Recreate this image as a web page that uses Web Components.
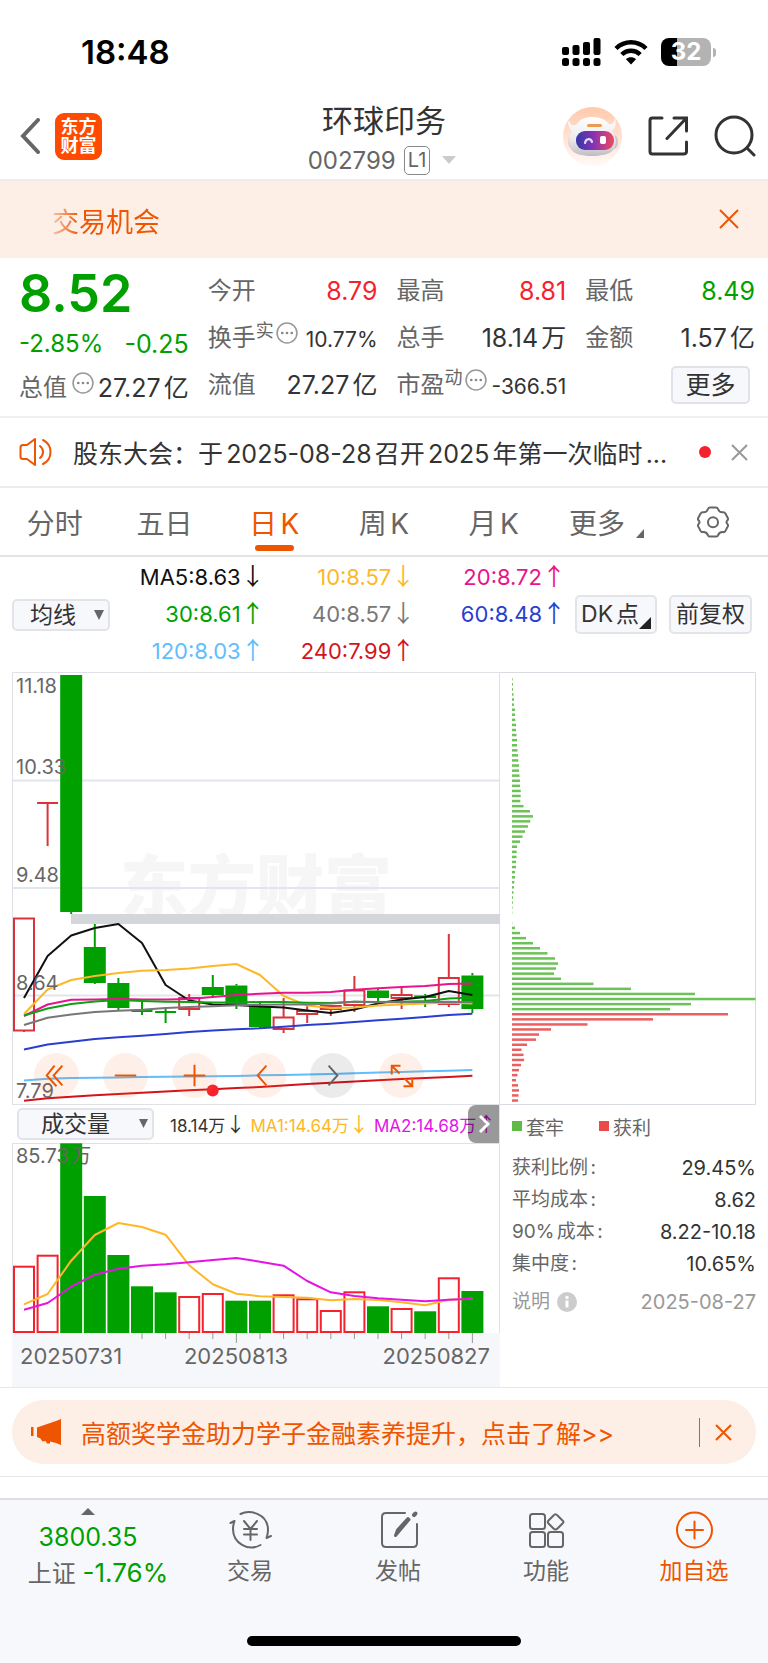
<!DOCTYPE html>
<html lang="zh-CN">
<head>
<meta charset="utf-8">
<meta name="viewport" content="width=device-width, initial-scale=1">
<title>环球印务 002799</title>
<style>
  body {
    margin: 0;
    background: #fff;
    color: #333;
    font-family: Inter, "Noto Sans CJK SC", sans-serif;
    text-autospace: normal;
    --up: #f5222d;
    --down: #00a000;
    --brand: #ee5500;
    --muted: #666;
    --line: #e6e8ec;
    --soft: #f7f8fb;
    --peach: #fdeee6;
  }
</style>
</head>
<body>
<stock-page></stock-page>

<script>
const RESET = `
  :host, * { box-sizing: border-box; }
  button, select { font: inherit; color: inherit; background: none; border: 0; padding: 0; margin: 0; cursor: pointer; text-autospace: inherit; }
  a { color: inherit; text-decoration: none; }
  svg { display: block; }
`;

class StatusBar extends HTMLElement {
  constructor() {
    super();
    this.attachShadow({ mode: 'open' });
  }

  connectedCallback() {
    this.shadowRoot.innerHTML = `
      <style>
        ${RESET}
        :host { display: flex; justify-content: space-between; align-items: center; height: 90px; padding: 14px 52px 0 81px; color: #000; }
        .time { font-size: 33px; font-weight: 600; }
        .right { display: flex; align-items: center; gap: 13px; }
        .battery { display: flex; align-items: center; gap: 2px; }
        .cell { width: 50px; height: 28px; border-radius: 8px; background: linear-gradient(90deg, #000 32%, #b3b3b3 32%); color: #fff; font-size: 24px; line-height: 28px; font-weight: 700; text-align: center; }
        .nub { width: 3px; height: 9px; border-radius: 0 4px 4px 0; background: #b3b3b3; }
      </style>
      <span class="time">18:48</span>
      <div class="right">
        <svg width="39" height="28" viewBox="0 0 39 28" aria-label="信号">
          <rect x="0" y="9" width="7" height="8" rx="2"/><rect x="10.500" y="7" width="7" height="10" rx="2"/>
          <rect x="21" y="4" width="7" height="13" rx="2"/><rect x="31.500" y="0" width="7" height="17" rx="2"/>
          <rect x="0" y="20" width="7" height="8" rx="2.500"/><rect x="10.500" y="20" width="7" height="8" rx="2.500"/>
          <rect x="21" y="20" width="7" height="8" rx="2.500"/><rect x="31.500" y="20" width="7" height="8" rx="2.500"/>
        </svg>
        <svg width="34" height="26" viewBox="0 0 34 26" fill="none" stroke="#000" stroke-width="4.500" aria-label="无线网络">
          <path d="M2 9.500C10.500 1.300 23.500 1.300 32 9.500"/>
          <path d="M7.800 15.500C13 10.500 21 10.500 26.200 15.500"/>
          <path d="M17 25.500l-5-5.300c2.800-2.600 7.200-2.600 10 0z" fill="#000" stroke="none"/>
        </svg>
        <div class="battery"><span class="cell">32</span><span class="nub"></span></div>
      </div>
    `;
  }
}

class StockHeader extends HTMLElement {
  constructor() {
    super();
    this.attachShadow({ mode: 'open' });
  }

  connectedCallback() {
    this.shadowRoot.innerHTML = `
      <style>
        ${RESET}
        :host { display: grid; grid-template-columns: 1fr auto 1fr; align-items: center; height: 91px; padding: 3px 12px 0; border-bottom: 2px solid #ececee; }
        .left { display: flex; align-items: center; gap: 15px; padding-left: 8px; }
        .logo { width: 47px; height: 47px; border-radius: 9px; background: #ff4a00; color: #fff; font-size: 18px; line-height: 19px; font-weight: 700; display: grid; place-content: center; text-align: center; }
        .mid { padding-top: 8px; text-align: center; }
        h1 { margin: 0; font-size: 31px; line-height: 40px; font-weight: 400; }
        .code { display: flex; align-items: center; justify-content: center; gap: 8px; height: 38px; font-size: 24px; color: var(--muted); }
        .level { font-size: 20px; line-height: 27px; padding: 0 3px; border: 1px solid #888; border-radius: 5px; }
        .code svg { margin: 0 4px; }
        .right { display: flex; align-items: center; justify-content: flex-end; gap: 26px; }
      </style>
      <div class="left">
        <button aria-label="返回"><svg width="20" height="36" viewBox="0 0 20 36" fill="none" stroke="#666" stroke-width="4" stroke-linecap="round"><path d="M18 2L3 18l15 16"/></svg></button>
        <a class="logo" href="#"><span>东方</span><span>财富</span></a>
      </div>
      <div class="mid">
        <h1>环球印务</h1>
        <div class="code"><span>002799</span><span class="level">L1</span><svg width="14" height="8" viewBox="0 0 14 8" fill="#ccc"><path d="M0 0h14L7 8z"/></svg></div>
      </div>
      <div class="right">
        <button aria-label="智能助手">
          <svg width="59" height="59" viewBox="0 0 59 59">
            <defs>
              <linearGradient id="bg" x2="0" y2="1"><stop stop-color="#ffc9ab"/><stop offset="1" stop-color="#fffaf7"/></linearGradient>
              <linearGradient id="visor"><stop stop-color="#3438a8"/><stop offset=".45" stop-color="#8632b4"/><stop offset="1" stop-color="#ee4a5c"/></linearGradient>
              <linearGradient id="shell" x2="0" y2="1"><stop stop-color="#fff"/><stop offset=".6" stop-color="#ebe8ec"/><stop offset="1" stop-color="#bfbcc3"/></linearGradient>
            </defs>
            <circle cx="29.500" cy="29.500" r="29.500" fill="url(#bg)"/>
            <ellipse cx="9.500" cy="35" rx="4" ry="7" fill="#bfc1cc"/><ellipse cx="51" cy="35" rx="4" ry="7" fill="#c9c6cf"/>
            <path d="M6 13c1 5 4 6 7 5 4-6 9-8 16-8s13 2 17 7c3 1 5-1 6-6 2 6 0 11-3 13 4 5 5 12 2 18-3 5-12 7-22 7s-18-2-21-7c-3-6-2-13 1-18-3-3-5-7-3-11z" fill="url(#shell)"/>
            <rect x="24" y="17" width="15" height="3" rx="1.500" fill="#ec9a52"/>
            <rect x="13" y="24" width="38" height="19" rx="9" fill="url(#visor)"/>
            <path d="M22 36c1-5 6-5 7-1" fill="none" stroke="#d9dcff" stroke-width="2.200" stroke-linecap="round"/>
            <rect x="37" y="29" width="6" height="8" rx="2" fill="#fff"/>
          </svg>
        </button>
        <button aria-label="分享"><svg width="40" height="42" viewBox="0 0 40 42" fill="none" stroke="#333" stroke-width="3" stroke-linecap="round"><path d="M14 3H4.500Q2 3 2 5.500v31Q2 39 4.500 39h31q3 0 3-2.500V27M26 3h12.500v13M38 3.500L19 23.500"/></svg></button>
        <button aria-label="搜索"><svg width="42" height="42" viewBox="0 0 42 42" fill="none" stroke="#333" stroke-width="3" stroke-linecap="round"><circle cx="20" cy="20" r="18"/><path d="M33 33l7 7"/></svg></button>
      </div>
    `;
  }
}

class TradeBanner extends HTMLElement {
  constructor() {
    super();
    this.attachShadow({ mode: 'open' });
  }

  connectedCallback() {
    this.shadowRoot.innerHTML = `
      <style>
        ${RESET}
        :host { display: flex; align-items: center; justify-content: space-between; height: 77px; padding: 2px 29px 0 52px; background: var(--peach); color: var(--brand); font-size: 27px; }
        a { background: linear-gradient(90deg, #f9c4a6, var(--brand) 28px); -webkit-background-clip: text; background-clip: text; color: transparent; }
        button { padding-bottom: 4px; }
      </style>
      <a href="#"><slot></slot></a>
      <button aria-label="关闭"><svg width="20" height="20" viewBox="0 0 20 20" fill="none" stroke="#ee5500" stroke-width="2"><path d="M1 1l18 18M19 1L1 19"/></svg></button>
    `;
  }
}

class StockQuote extends HTMLElement {
  constructor() {
    super();
    this.attachShadow({ mode: 'open' });
  }

  connectedCallback() {
    const info = `<button class="info" aria-label="说明"><svg width="22" height="22" viewBox="0 0 21 21"><circle cx="10.500" cy="10.500" r="9.500" fill="none" stroke="#999" stroke-width="1.500"/><g fill="#888"><circle cx="6" cy="10.500" r="1.300"/><circle cx="10.500" cy="10.500" r="1.300"/><circle cx="15" cy="10.500" r="1.300"/></g></svg></button>`;
    const cell = (label, value, cls = '', sup = '', more = '') =>
      `<div class="cell"><span class="label">${label}${sup ? `<sup>${sup}</sup>` : ''}</span>${more}<span class="value ${cls}">${value}</span></div>`;

    this.shadowRoot.innerHTML = `
      <style>
        ${RESET}
        :host { display: grid; grid-template-columns: repeat(4, 1fr); column-gap: 19px; height: 160px; padding: 9px 13px 9px 19px; border-bottom: 2px solid #f0f0f2; }
        .col { display: grid; grid-template-rows: repeat(3, 47px); min-width: 0; }
        .col.first { grid-template-rows: 53px 47px 41px; }
        .price { font-size: 52px; line-height: 54px; font-weight: 600; color: var(--down); }
        .cell { display: flex; align-items: center; font-size: 25px; line-height: 30px; white-space: nowrap; }
        .label { color: var(--muted); font-size: 24px; }
        sup { font-size: 18px; line-height: 18px; }
        .value { margin-left: auto; }
        .small { font-size: 21px; padding-top: 5px; }
        .mid { font-size: 24px; }
        .up { color: var(--up); }
        .down { color: var(--down); }
        .info { margin: 0 0 10px 2px; }
        .first .info { margin-left: 5px; }
        .more { width: 79px; height: 38px; margin: 0 5px 0 auto; font-size: 25px; line-height: 34px; color: #333; background: var(--soft); border: 2px solid #dfe3e8; border-radius: 5px; }
      </style>
      <div class="col first">
        <div class="price">8.52</div>
        <div class="cell down"><span class="mid">-2.85%</span><span class="value">-0.25</span></div>
        ${cell('总值', '27.27亿', '', '', info)}
      </div>
      <div class="col">
        ${cell('今开', '8.79', 'up')}
        ${cell('换手', '10.77%', 'small', '实', info)}
        ${cell('流值', '27.27亿')}
      </div>
      <div class="col">
        ${cell('最高', '8.81', 'up')}
        ${cell('总手', '18.14万')}
        ${cell('市盈', '-366.51', 'small', '动', info)}
      </div>
      <div class="col">
        ${cell('最低', '8.49', 'down')}
        ${cell('金额', '1.57亿')}
        <div class="cell"><button class="more">更多</button></div>
      </div>
    `;
  }
}

class NewsTicker extends HTMLElement {
  constructor() {
    super();
    this.attachShadow({ mode: 'open' });
  }

  connectedCallback() {
    this.shadowRoot.innerHTML = `
      <style>
        ${RESET}
        :host { display: flex; align-items: center; height: 70px; padding: 0 20px 0 19px; border-bottom: 2px solid #ececee; font-size: 25px; }
        a { flex: 1; margin-left: 20px; white-space: nowrap; overflow: hidden; }
        .dot { width: 12px; height: 12px; border-radius: 50%; background: var(--up); margin-right: 20px; }
      </style>
      <svg width="34" height="28" viewBox="0 0 34 28" fill="none" stroke="#ee5500" stroke-width="2" stroke-linecap="round" stroke-linejoin="round">
        <path d="M16 1L8 7H4Q1.500 7 1.500 9.500v9Q1.500 21 4 21h4l8 6z"/><path d="M21 8c4 3 4 9 0 12M24 2c10 5 10 19 0 24"/>
      </svg>
      <a href="#"><slot></slot></a>
      <span class="dot"></span>
      <button aria-label="关闭"><svg width="17" height="17" viewBox="0 0 17 17" fill="none" stroke="#999" stroke-width="2"><path d="M1 1l15 15M16 1L1 16"/></svg></button>
    `;
  }
}

class PeriodTabs extends HTMLElement {
  constructor() {
    super();
    this.attachShadow({ mode: 'open' });
  }

  connectedCallback() {
    const tabs = ['分时', '五日', '日K', '周K', '月K'];
    this.shadowRoot.innerHTML = `
      <style>
        ${RESET}
        :host { display: grid; grid-template-columns: repeat(7, 1fr); height: 69px; border-bottom: 2px solid #e3e3e6; color: var(--muted); font-size: 28px; }
        button { position: relative; display: flex; align-items: center; justify-content: center; }
        .active { color: var(--brand); }
        .active::after { content: ""; position: absolute; left: calc(50% - 19px); bottom: 4px; width: 39px; height: 6px; border-radius: 3px; background: var(--brand); }
        .more { gap: 11px; padding-left: 6px; }
        .more svg { margin-top: 24px; }
      </style>
      ${tabs.map((t, i) => `<button class="${i === 2 ? 'active' : ''}">${t}</button>`).join('')}
      <button class="more">更多<svg width="8" height="9" viewBox="0 0 8 9" fill="#666"><path d="M8 0v9H0z"/></svg></button>
      <button aria-label="设置"><svg width="32" height="32" viewBox="0 0 32 32" fill="none" stroke="#666" stroke-width="2" stroke-linejoin="round">
        <path d="M11 3q.6-1.500 2-1.500h6q1.400 0 2 1.500 1.300 3.700 5 3.300 1.600-.2 2.400 1.200l2.400 4.500q.6 1.200-.3 2.300-2 1.900 0 3.800.9 1.100.3 2.300l-2.400 4.500q-.8 1.400-2.400 1.200-3.700-.4-5 3.300-.6 1.100-2 1.100h-6q-1.400 0-2-1.100-1.300-3.700-5-3.300-1.600.2-2.400-1.200l-2.400-4.500q-.6-1.200.3-2.300 2-1.900 0-3.800-.9-1.100-.3-2.300l2.400-4.500Q4.400 6.100 6 6.300q3.700.4 5-3.300z"/><circle cx="16" cy="16.200" r="5"/></svg></button>
    `;
  }
}

class MaLegend extends HTMLElement {
  constructor() {
    super();
    this.attachShadow({ mode: 'open' });
  }

  connectedCallback() {
    const items = [
      ['MA5:8.63', '↓', '#111'], ['10:8.57', '↓', '#fdb827'], ['20:8.72', '↑', '#e8148c'],
      ['30:8.61', '↑', '#00a000'], ['40:8.57', '↓', '#777'], ['60:8.48', '↑', '#2a3fd0'],
      ['120:8.03', '↑', '#62bdfd'], ['240:7.99', '↑', '#d4141c']
    ];
    this.shadowRoot.innerHTML = `
      <style>
        ${RESET}
        :host { display: flex; align-items: center; height: 115px; padding: 0 16px 0 12px; }
        .select { position: relative; width: 98px; }
        select { appearance: none; width: 100%; height: 32px; padding-left: 16px; font-size: 23px; line-height: 28px; background: var(--soft); border: 2px solid #e2e4e8; border-radius: 5px; }
        .select svg { position: absolute; right: 6px; top: 11px; pointer-events: none; }
        .values { flex: 1; display: grid; grid-template-columns: repeat(3, 1fr); padding-left: 4px; font-size: 22px; line-height: 37px; text-align: right; white-space: nowrap; text-autospace: no-autospace; }
        .values i { font: 24px/30px "Noto Sans CJK SC", sans-serif; }
        .btn { position: relative; height: 39px; background: var(--soft); border: 2px solid #e2e4e8; border-radius: 5px; font-size: 23px; line-height: 35px; }
        .dk { width: 82px; margin-left: 9px; padding-right: 12px; }
        .dk svg { position: absolute; right: 4px; bottom: 3px; }
        .fq { width: 83px; margin-left: 12px; }
      </style>
      <div class="select">
        <select aria-label="指标"><option>均线</option></select>
        <svg width="10" height="10" viewBox="0 0 10 10" fill="#666"><path d="M0 0h10L5 10z"/></svg>
      </div>
      <div class="values">${items.map(([t, a, c]) => `<span style="color:${c}">${t}<i>${a}</i></span>`).join('')}</div>
      <button class="btn dk">DK点<svg width="12" height="12" viewBox="0 0 12 12" fill="#222"><path d="M12 0v12H0z"/></svg></button>
      <button class="btn fq">前复权</button>
    `;
  }
}

const STEP = 23.6;
const RED = '#d9343c';
const GREEN = '#00a000';
const cx = i => 12 + STEP * i;
const polyline = (ys, color) =>
  `<polyline points="${ys.map((y, i) => `${cx(i)},${y}`).join(' ')}" fill="none" stroke="${color}" stroke-width="2" stroke-linejoin="round"/>`;

class PriceChart extends HTMLElement {
  constructor() {
    super();
    this.attachShadow({ mode: 'open' });
  }

  // [direction, high, top of body, bottom of body, low]
  get candles() {
    return [
      ['up', 246, 246.5, 358.5, 360], ['up', 131, 131, 131, 174], ['down', 3, 3, 240, 242], ['down', 252, 275, 311, 312],
      ['down', 306, 311, 336, 338], ['down', 330, 339, 340, 343], ['down', 336, 340, 341, 351], ['up', 322, 326, 337, 344],
      ['down', 303, 315, 323, 325], ['down', 312, 313.5, 332, 337], ['down', 330, 334, 355, 356], ['up', 326, 345.5, 357, 361],
      ['up', 334, 339, 342, 351], ['up', 333, 334, 337, 344], ['up', 304, 318.5, 333, 340], ['down', 316, 318.5, 326, 330],
      ['up', 315, 323, 326, 337], ['down', 322, 323.5, 326, 335], ['up', 262, 306, 332, 335], ['down', 301, 303.5, 337, 341]
    ];
  }

  get averages() {
    return [
      ['#111', [326, 284, 263.5, 256, 252, 271, 313, 328.5, 332.5, 333, 334.5, 335.5, 338.5, 341, 337.5, 331.5, 327.5, 325, 319, 323]],
      ['#fdb827', [342, 317.5, 308, 304, 301, 298.7, 298, 296.5, 294, 292, 303, 324, 333.5, 336, 335.5, 333.5, 332.5, 331.5, 330.5, 331.5]],
      ['#e8148c', [344, 332.5, 327.7, 327.5, 327, 327.5, 327.5, 327, 325, 323, 321.7, 320.7, 320.7, 320, 317.7, 316.3, 315, 314, 312, 311.5]],
      ['#12a012', [343.5, 336.5, 332, 329.5, 328, 329, 329.7, 330, 330.5, 330.5, 330, 330, 330.7, 331, 329.7, 330, 329.7, 329, 326.5, 325.5]],
      ['#777', [353, 345.7, 342.5, 340, 338.7, 337.7, 336, 335, 334.3, 333.3, 332.7, 332.5, 332.5, 331.5, 329.7, 330.3, 330.3, 330, 329.7, 330.3]],
      ['#2a3fd0', [377.5, 372.5, 369.7, 367, 365.3, 363.7, 362, 360, 358.5, 357.3, 356.3, 354.7, 353, 351.7, 350, 348.3, 346.7, 345, 343, 341.7]],
      ['#62bdfd', [408.5, 406.7, 406, 405.7, 405.5, 405, 404.8, 404.5, 404.2, 404, 403.3, 403, 402.5, 402, 401.3, 400.5, 400, 399.3, 398.7, 398]],
      ['#d4141c', [428.7, 426.2, 424.7, 423.3, 422, 420.8, 419.5, 418.3, 417.3, 416, 415, 413.5, 412, 410.7, 409.5, 408.3, 407, 406, 405, 403.7]]
    ];
  }

  candle([dir, high, top, bottom, low], i) {
    const x = cx(i);
    const color = dir === 'up' ? RED : GREEN;
    if (bottom - top < 2) {
      return `<path d="M${x - 10.5} ${top}h21M${x} ${high}V${low}" stroke="${color}" stroke-width="2"/>`;
    }
    const wick = `<path d="M${x} ${high}V${top}M${x} ${bottom}V${low}" stroke="${color}" stroke-width="2"/>`;
    return wick + (dir === 'up'
      ? `<rect x="${x - 10}" y="${top}" width="20" height="${bottom - top}" fill="none" stroke="${color}" stroke-width="2"/>`
      : `<rect x="${x - 11}" y="${top}" width="22" height="${bottom - top}" fill="${color}"/>`);
  }

  connectedCallback() {
    const labels = [['11.18', 21], ['10.33', 102], ['9.48', 210], ['8.64', 318], ['7.79', 426]];
    const tools = [
      ['后退', '', '<path d="M21 13L13 23l10 11M29 13L20 23l9 10"/>'],
      ['缩小', '', '<path d="M12 23h22"/>'],
      ['放大', '', '<path d="M12 23h22M23 12v22"/>'],
      ['左移', '', '<path d="M26 13L17 23l9 10"/>'],
      ['右移', 'off', '<path d="M19 13l9 10-9 10"/>'],
      ['全屏', '', '<path d="M13 22v-9h9M13 13l8 8M34 25v9h-9M34 34l-8-8"/>']
    ];
    this.shadowRoot.innerHTML = `
      <style>
        ${RESET}
        :host { display: block; position: relative; }
        .chart { width: 100%; height: auto; }
        text { font-size: 20px; fill: #666; }
        .mark { font-size: 68px; font-weight: 900; fill: #f6f6f7; }
        .tools { position: absolute; left: 22px; bottom: 7px; display: flex; gap: 24px; }
        .tools button { width: 45px; height: 45px; border-radius: 50%; background: rgba(250, 110, 30, .1); color: var(--brand); }
        .tools .off { background: rgba(0, 0, 0, .08); color: #666; }
      </style>
      <svg class="chart" viewBox="0 0 488 433">
        <text class="mark" x="108" y="240">东方财富</text>
        <path d="M0 108.500H488M0 216H488M0 323.500H488" stroke="#e3e5ee" stroke-width="2"/>
        <path d="M0.500 433V0.500H487.500V433M0 432.500H488" fill="none" stroke="#dfe1e6"/>
        <rect x="59" y="242" width="429" height="10" fill="#d3d6db"/>
        ${this.candles.map((c, i) => this.candle(c, i)).join('')}
        ${this.averages.map(([color, ys]) => polyline(ys, color)).join('')}
        ${labels.map(([t, y]) => `<text x="4" y="${y}">${t}</text>`).join('')}
        <circle cx="200.700" cy="418.500" r="6" fill="#f5222d"/>
      </svg>
      <div class="tools">
        ${tools.map(([name, cls, icon]) => `<button class="${cls}" aria-label="${name}"><svg width="45" height="45" viewBox="0 0 46 46" fill="none" stroke="currentColor" stroke-width="2">${icon}</svg></button>`).join('')}
      </div>
    `;
  }
}

class VolumeChart extends HTMLElement {
  constructor() {
    super();
    this.attachShadow({ mode: 'open' });
  }

  connectedCallback() {
    // sign gives the direction: negative is a falling day
    const tops = [122.7, 111.7, -0.3, -53, -112, -143.3, -149.3, 153, 150, -157.7, -157.7, 151.3, 155.3, 167, 148.3, -163.3, 165, -168.3, 134.3, -148];
    const ma1 = [161.3, 151, 117.7, 92, 80, 84, 91.7, 122.3, 141.3, 150.7, 153.3, 154, 154.7, 157.3, 156, 157, 159.3, 162.3, 156.7, 155.7];
    const ma2 = [166.7, 160, 143.7, 131.7, 125.7, 122.7, 121.3, 119.3, 117, 115, 118.7, 122.7, 138, 149.3, 153, 155.3, 156.7, 158.3, 156.7, 155.7];
    const bar = (v, i) => v > 0
      ? `<rect x="${cx(i) - 10}" y="${v + 1}" width="20" height="${188 - v}" fill="none" stroke="#f5222d" stroke-width="2"/>`
      : `<rect x="${cx(i) - 11}" y="${-v}" width="22" height="${190 + v}" fill="${GREEN}"/>`;
    const ticks = tops.map((_, i) => i < 5 ? '' : `<path d="M${cx(i)} 190v${i === 9 || i === 19 ? 10 : 6}" stroke="#999"/>`);

    this.shadowRoot.innerHTML = `
      <style>
        ${RESET}
        :host { display: block; }
        .head { position: relative; display: flex; align-items: center; height: 38px; padding-left: 5px; border-right: 1px solid #dfe1e6; font-size: 17px; white-space: nowrap; overflow: hidden; text-autospace: no-autospace; }
        .select { position: relative; flex: none; width: 137px; margin-right: 16px; }
        select { appearance: none; width: 100%; height: 32px; padding-left: 22px; font-size: 23px; line-height: 28px; background: var(--soft); border: 2px solid #e2e4e8; border-radius: 5px; }
        .select svg { position: absolute; right: 6px; top: 11px; pointer-events: none; }
        .head span { margin-right: 5px; }
        .head i { font: 20px/20px "Noto Sans CJK SC", sans-serif; }
        .y { color: #fdb827; }
        .p { color: #e414e4; }
        .next { position: absolute; right: -1px; top: 0; width: 32px; height: 38px; display: grid; place-items: center; background: rgba(0, 0, 0, .4); border-radius: 8px 0 0 8px; }
        .chart { width: 100%; height: auto; }
        text { font-size: 22px; fill: #666; }
        .max { font-size: 20px; }
      </style>
      <div class="head">
        <div class="select">
          <select aria-label="副图指标"><option>成交量</option></select>
          <svg width="9" height="9" viewBox="0 0 9 9" fill="#666"><path d="M0 0h9L4.500 9z"/></svg>
        </div>
        <span>18.14万<i>↓</i></span><span class="y">MA1:14.64万<i>↓</i></span><span class="p">MA2:14.68万<i>↑</i></span>
        <button class="next" aria-label="更多数据"><svg width="12" height="20" viewBox="0 0 12 20" fill="none" stroke="#fff" stroke-width="3"><path d="M2 2l8 8-8 8"/></svg></button>
      </div>
      <svg class="chart" viewBox="0 0 488 244">
        <rect y="190" width="488" height="54" fill="#f6f7fa"/>
        <path d="M0.500 190V0.500H487.500V190" fill="none" stroke="#dfe1e6"/>
        ${tops.map(bar).join('')}
        ${polyline(ma1, '#fdb827')}${polyline(ma2, '#e414e4')}
        ${ticks.join('')}
        <text class="max" x="4" y="20">85.73万</text>
        <text x="8" y="221">20250731</text>
        <text x="224" y="221" text-anchor="middle">20250813</text>
        <text x="478" y="221" text-anchor="end">20250827</text>
      </svg>
    `;
  }
}

class ChipPanel extends HTMLElement {
  constructor() {
    super();
    this.attachShadow({ mode: 'open' });
  }

  connectedCallback() {
    const chips = [
      0.6, 1, 1, 1.5, 2, 2, 3, 3, 3.3, 4, 4, 4.5, 5, 5, 5.5, 6, 6.3, 7, 7, 7.5, 8, 8, 8.7, 8.7, 8.3, 11.5, 18, 21, 18.3, 16, 13, 10.5,
      8, 5, 4.7, 4.5, 4, 4, 3, 3, 2.3, 2, 1.5, 1, 0.8, 0.5, 0.3, 0, 0.3, 3, 8, 14, 21, 28, 35.5, 43, 46, 44, 42, 49, 81.5, 119, 183,
      243.5, 179, 158, 216, 141, 75.5, 39, 27, 24, 15, 9.5, 11.5, 12, 9, 7, 5.5, 4, 6, 7, 6.5, 6
    ];
    const rows = [['获利比例:', '29.45%'], ['平均成本:', '8.62'], ['90%成本:', '8.22-10.18'], ['集中度:', '10.65%']];
    this.shadowRoot.innerHTML = `
      <style>
        ${RESET}
        :host { display: block; font-size: 19px; color: var(--muted); }
        .chart { width: 100%; height: auto; }
        .legend { display: flex; gap: 35px; height: 42px; padding-left: 12px; align-items: center; }
        .legend span { display: flex; align-items: center; gap: 4px; }
        .legend span::before { content: ""; width: 10px; height: 10px; background: #5fbb46; }
        .legend .win::before { background: #ea4a4a; }
        dl { margin: 5px 0 0; padding-left: 12px; }
        dl div { display: flex; justify-content: space-between; line-height: 32px; }
        dd { margin: 0; font-size: 20px; color: #333; }
        .note { display: flex; align-items: center; gap: 7px; padding: 6px 0 0 12px; color: #999; line-height: 32px; }
        .note time { margin-left: auto; font-size: 20px; }
      </style>
      <svg class="chart" viewBox="0 0 256 433">
        <path d="M0 0.500H255.500V432.500H0" fill="none" stroke="#d9dbe3"/>
        ${chips.map((w, i) => `<rect x="12" y="${(6 + i * 5.076).toFixed(1)}" width="${w}" height="2.500" fill="${i < 66 ? '#6cc158' : '#ec5f5f'}"/>`).join('')}
      </svg>
      <div class="legend"><span>套牢</span><span class="win">获利</span></div>
      <dl>${rows.map(([k, v]) => `<div><dt>${k}</dt><dd>${v}</dd></div>`).join('')}</dl>
      <div class="note">说明<button aria-label="说明"><svg width="20" height="20" viewBox="0 0 20 20"><circle cx="10" cy="10" r="10" fill="#ccc"/><path d="M10 8.500v7" stroke="#fff" stroke-width="3"/><circle cx="10" cy="5.500" r="1.700" fill="#fff"/></svg></button><time>2025-08-27</time></div>
    `;
  }
}

class PromoBar extends HTMLElement {
  constructor() {
    super();
    this.attachShadow({ mode: 'open' });
  }

  connectedCallback() {
    this.shadowRoot.innerHTML = `
      <style>
        ${RESET}
        :host { display: block; padding: 12px; border: solid var(--line); border-width: 1px 0; }
        .pill { display: flex; align-items: center; height: 64px; padding: 0 24px 0 19px; border-radius: 32px; background: var(--peach); color: var(--brand); font-size: 25px; }
        a { flex: 1; margin-left: 19px; white-space: nowrap; }
        .pill button { padding: 6px 0 6px 15px; border-left: 1px solid var(--brand); }
      </style>
      <div class="pill">
        <svg width="31" height="26" viewBox="0 0 31 26" fill="#ee5500"><path d="M0 8h2.500v9H0zM6 8.500L25 2l5-2v26l-5-2-6-1.500v2h-3l-1.500-2.500-3 .5-2-3L6 18z"/></svg>
        <a href="#"><slot></slot></a>
        <button aria-label="关闭"><svg width="17" height="17" viewBox="0 0 17 17" fill="none" stroke="#ee5500" stroke-width="2"><path d="M1 1l15 15M16 1L1 16"/></svg></button>
      </div>
    `;
  }
}

class BottomBar extends HTMLElement {
  constructor() {
    super();
    this.attachShadow({ mode: 'open' });
  }

  connectedCallback() {
    const items = [
      ['交易', '<path d="M9.500 3C19 -2 37 3 37 19c0 3-.5 5-1.500 8l4.500-2M29.500 34C17 41 2 32 2 18c0-3 .5-5 1.500-8L-.5 12"/><path d="M13 10l6.500 8 6.500-8M19.500 18v11M13 18h13M13 23.500h13"/>'],
      ['发帖', '<path d="M26 2H7Q3 2 3 6v26q0 4 4 4h27q4 0 4-4V13"/><path d="M30 8.500L16.500 24.500l2-5.500L29 7.500z" stroke-width="3"/><path d="M35 4l1.500-1.500" stroke-width="4"/>'],
      ['功能', '<rect x="3" y="3" width="15" height="15" rx="2.500"/><rect x="3" y="21" width="15" height="15" rx="2.500"/><rect x="21" y="21" width="15" height="15" rx="2.500"/><path d="M26.500 4.500Q28.500 2 30.500 4.500l5 5q2 1.500 0 3l-5 5q-2 2-4 0l-5-5q-1.500-1.500 0-3z"/>'],
      ['加自选', '<circle cx="19.500" cy="19" r="17.500"/><path d="M11 19h17M19.500 10.500v17"/>']
    ];
    this.shadowRoot.innerHTML = `
      <style>
        ${RESET}
        :host { display: block; background: var(--soft); border-top: 2px solid #dcdee2; }
        nav { display: flex; height: 100px; color: var(--muted); }
        a { flex: 1; display: flex; flex-direction: column; align-items: center; font-size: 23px; line-height: 34px; white-space: nowrap; }
        nav a svg { margin: 11px 0 5px; overflow: visible; }
        a.index { flex: 0 0 176px; font-size: 24px; line-height: 35px; }
        a.index svg { margin: 8px 0 5px; }
        .down { color: var(--down); font-size: 25px; }
        .change { padding-left: 20px; }
        .change .down { font-size: 26px; }
        a.add { color: var(--brand); }
        .home { width: 274px; height: 10px; margin: 36px auto 17px; border-radius: 5px; background: #000; }
      </style>
      <nav>
        <a class="index" href="#">
          <svg width="14" height="7" viewBox="0 0 14 7" fill="#666"><path d="M7 0l7 7H0z"/></svg>
          <span class="down">3800.35</span>
          <span class="change">上证 <span class="down">-1.76%</span></span>
        </a>
        ${items.map(([label, icon]) => `<a href="#" class="${label === '加自选' ? 'add' : ''}"><svg width="39" height="38" viewBox="0 0 39 38" fill="none" stroke="currentColor" stroke-width="2" stroke-linecap="round" stroke-linejoin="round">${icon}</svg>${label}</a>`).join('')}
      </nav>
      <div class="home"></div>
    `;
  }
}

class StockPage extends HTMLElement {
  constructor() {
    super();
    this.attachShadow({ mode: 'open' });
  }

  connectedCallback() {
    this.shadowRoot.innerHTML = `
      <style>
        :host { display: flex; flex-direction: column; min-height: 100vh; }
        .charts { display: flex; padding: 0 12px; }
        .main { flex: 488 1 0; min-width: 0; }
        chip-panel { flex: 256 1 0; min-width: 0; }
        bottom-bar { margin-top: auto; }
      </style>
      <status-bar></status-bar>
      <stock-header></stock-header>
      <trade-banner>交易机会</trade-banner>
      <stock-quote></stock-quote>
      <news-ticker>股东大会：于2025-08-28召开2025年第一次临时...</news-ticker>
      <period-tabs></period-tabs>
      <ma-legend></ma-legend>
      <div class="charts">
        <div class="main">
          <price-chart></price-chart>
          <volume-chart></volume-chart>
        </div>
        <chip-panel></chip-panel>
      </div>
      <promo-bar>高额奖学金助力学子金融素养提升，点击了解&gt;&gt;</promo-bar>
      <bottom-bar></bottom-bar>
    `;
  }
}

customElements.define('status-bar', StatusBar);
customElements.define('stock-header', StockHeader);
customElements.define('trade-banner', TradeBanner);
customElements.define('stock-quote', StockQuote);
customElements.define('news-ticker', NewsTicker);
customElements.define('period-tabs', PeriodTabs);
customElements.define('ma-legend', MaLegend);
customElements.define('price-chart', PriceChart);
customElements.define('volume-chart', VolumeChart);
customElements.define('chip-panel', ChipPanel);
customElements.define('promo-bar', PromoBar);
customElements.define('bottom-bar', BottomBar);
customElements.define('stock-page', StockPage);
</script>
</body>
</html>
